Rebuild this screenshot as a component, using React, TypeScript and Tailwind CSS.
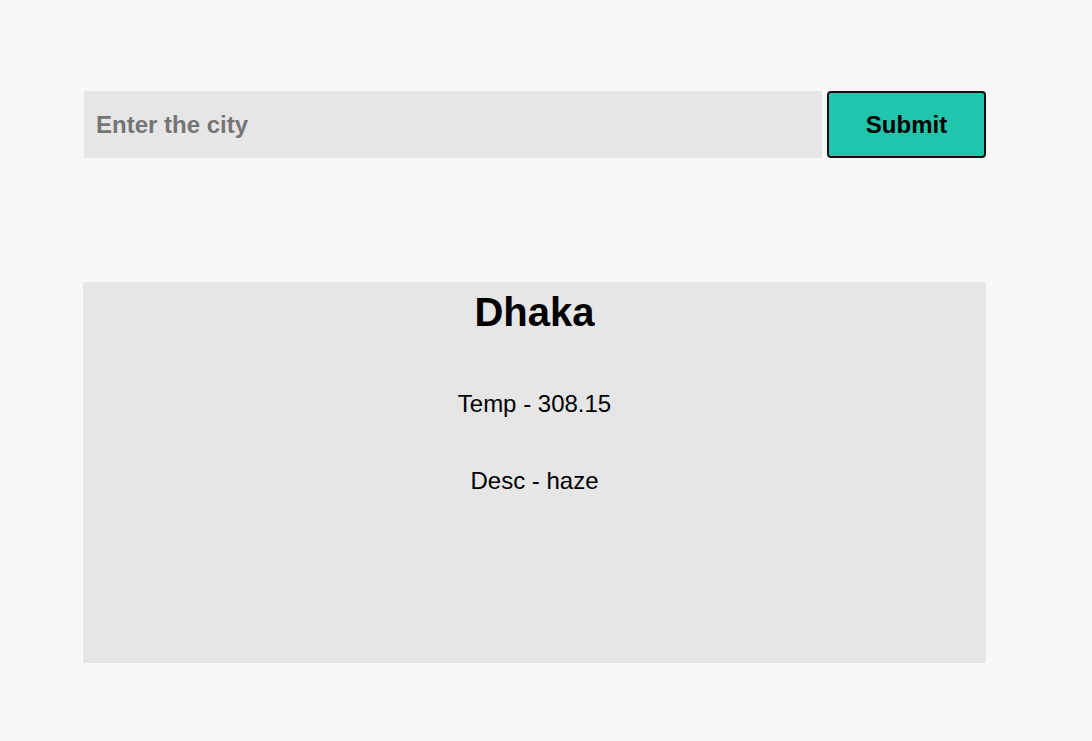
import React, { useState } from "react";

const App = () => {
  const [city, setCity] = useState("");

  return (
    <div className="min-h-screen bg-[#f8f8f8] pt-[91px] font-['Liberation_Sans',Arial,sans-serif]">
      <form
        className="flex gap-[5px] ml-[84px]"
        onSubmit={(e) => e.preventDefault()}
      >
        <input
          type="text"
          value={city}
          onChange={(e) => setCity(e.target.value)}
          placeholder="Enter the city"
          className="w-[738px] h-[67px] bg-[#e6e6e6] px-[12px] text-[24px] font-bold text-black placeholder:text-[#757575] outline-none"
        />
        <button
          type="submit"
          className="w-[159px] h-[67px] bg-[#20c5ab] border-2 border-[#111] rounded-[4px] text-[24px] font-bold text-black"
        >
          Submit
        </button>
      </form>

      <div className="ml-[83px] mt-[124px] w-[903px] h-[381px] bg-[#e6e6e6] rounded-[2px] flex flex-col items-center pt-[7px]">
        <h1 className="text-[40px] leading-[46px] font-bold text-black">
          Dhaka
        </h1>
        <p className="mt-[55px] text-[24px] leading-[28px] text-black">
          Temp - 308.15
        </p>
        <p className="mt-[49px] text-[24px] leading-[28px] text-black">
          Desc - haze
        </p>
      </div>
    </div>
  );
};

export default App;
